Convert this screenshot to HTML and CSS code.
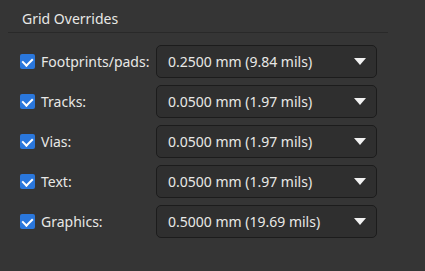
FILE: index.html
```html
<!DOCTYPE html>
<html lang="en">
<head>
  <meta charset="UTF-8">
  <title>Grid Overrides</title>
  <link rel="stylesheet" href="styles.css">
</head>
<body>

<div class="panel">
  <div class="panel-title">Grid Overrides</div>

  <div class="overrides">
    <label class="check"><span class="box"></span>Footprints/pads:</label>
    <div class="combo"><span>0.2500 mm (9.84 mils)</span><span class="arrow"></span></div>

    <label class="check"><span class="box"></span>Tracks:</label>
    <div class="combo"><span>0.0500 mm (1.97 mils)</span><span class="arrow"></span></div>

    <label class="check"><span class="box"></span>Vias:</label>
    <div class="combo"><span>0.0500 mm (1.97 mils)</span><span class="arrow"></span></div>

    <label class="check"><span class="box"></span>Text:</label>
    <div class="combo"><span>0.0500 mm (1.97 mils)</span><span class="arrow"></span></div>

    <label class="check"><span class="box"></span>Graphics:</label>
    <div class="combo"><span>0.5000 mm (19.69 mils)</span><span class="arrow"></span></div>
  </div>
</div>

</body>
</html>
```

FILE: styles.css
```css
:root {
  --bgColor: #353535;
  --textColor: #e8e8e6;
  --comboBg: #2f2f2f;
  --comboBorder: #1c1c1c;
  --checkColor: #2a77dc;
}

* {
  box-sizing: border-box;
}

html, body {
  height: 100%;
}

body {
  margin: 0;
  background: var(--bgColor);
  color: var(--textColor);
  font-family: "Noto Sans", "Open Sans", sans-serif;
  font-size: 14px;
}

.panel-title {
  margin: 0 37px 0 8px;
  padding: 9px 0 0 14px;
  height: 33px;
  line-height: 19px;
  border-bottom: 1px solid #292929;
}

.overrides {
  display: grid;
  grid-template-columns: 136px 221px;
  row-gap: 7px;
  margin: 12px 0 0 20px;
}

.check {
  display: flex;
  align-items: center;
  gap: 6px;
}

.box {
  position: relative;
  width: 15px;
  height: 15px;
  border-radius: 2px;
  background: var(--checkColor);
}
.box::after {
  content: "";
  position: absolute;
  left: 4px;
  top: 2px;
  width: 5px;
  height: 8px;
  border: solid #fff;
  border-width: 0 2.5px 2.5px 0;
  transform: rotate(45deg);
}

.combo {
  display: flex;
  align-items: center;
  justify-content: space-between;
  height: 33px;
  padding: 0 10px 0 11px;
  background: var(--comboBg);
  border: 1px solid var(--comboBorder);
  border-radius: 5px;
}

.arrow {
  width: 0;
  height: 0;
  border-left: 6px solid transparent;
  border-right: 6px solid transparent;
  border-top: 7px solid #f2f2f2;
}
```
